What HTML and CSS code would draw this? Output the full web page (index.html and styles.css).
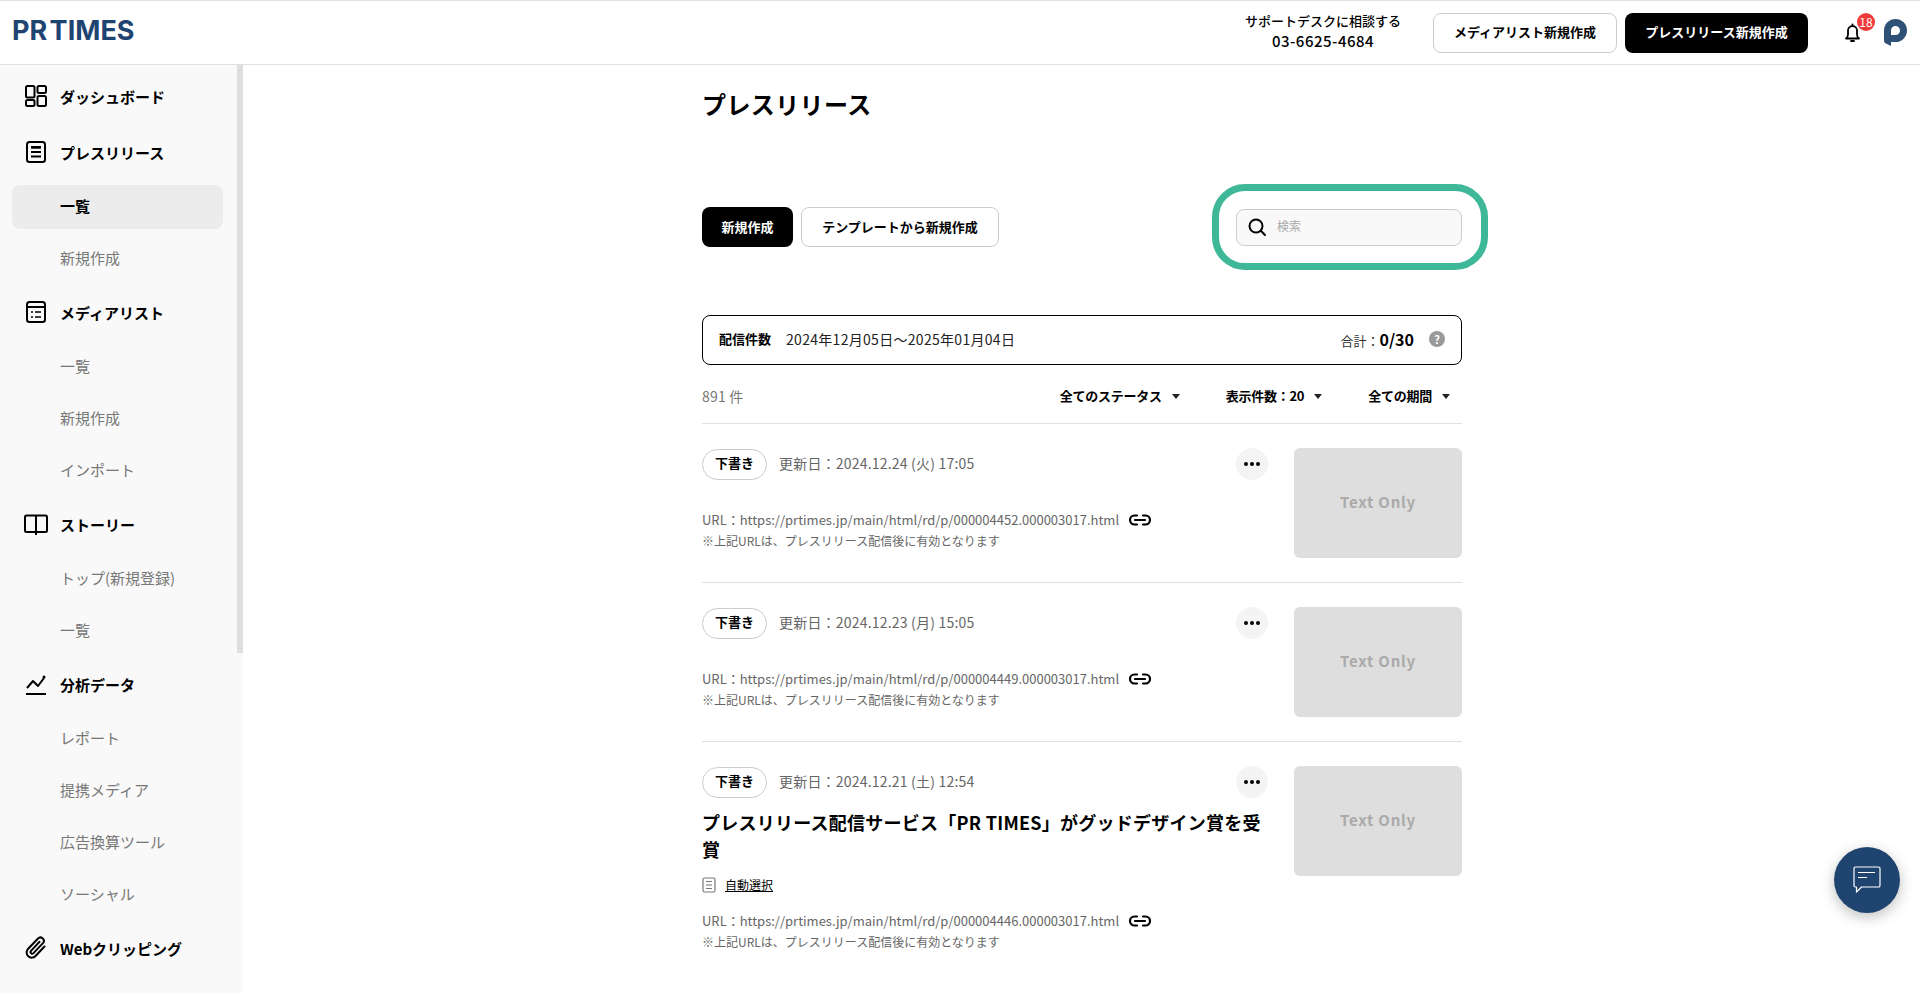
FILE: index.html
```html
<!DOCTYPE html>
<html lang="ja">

<head>
    <meta charset="UTF-8">
    <meta name="viewport" content="width=device-width, initial-scale=1.0">
    <title>プレスリリース一覧 | PR TIMES</title>
    <link rel="stylesheet" href="styles.css">
</head>

<body>
    <header class="topbar">
        <a class="logo">PR TIMES</a>
        <div class="topbar-right">
            <div class="support">
                <div>サポートデスクに相談する</div>
                <div class="support-tel">03-6625-4684</div>
            </div>
            <a class="btn btn-white btn-media">メディアリスト新規作成</a>
            <a class="btn btn-black btn-press">プレスリリース新規作成</a>
            <div class="bell">
                <svg width="15" height="19" viewBox="0 0 15 19" fill="none" stroke="#000" stroke-width="1.800" stroke-linejoin="round"><path d="M1 15.500c1.500-1 2-2 2-4V7.500a4.500 4.500 0 0 1 9 0v4c0 2 .5 3 2 4z"/><circle cx="7.500" cy="1.600" r="1" fill="#000" stroke="none"/><path d="M6 18h3" stroke-linecap="round"/></svg>
                <span class="badge">18</span>
            </div>
            <svg class="avatar" width="23" height="27" viewBox="0 0 23 27"><path d="M0 11.500A11.500 11.500 0 1 1 11.500 23H7v-7h4.500a4.500 4.500 0 1 0-4.500-4.500V27L2 24.500a3 3 0 0 1-2-3z" fill="#2f5176"/></svg>
        </div>
    </header>

    <div class="layout">
        <nav class="sidebar">
            <a class="nav-head">
                <svg width="24" height="24" viewBox="0 0 24 24" fill="none" stroke="#000" stroke-width="2"><rect x="2" y="2" width="8.500" height="11.500" rx="1.500"/><rect x="13.500" y="2" width="8.500" height="7" rx="1.500"/><rect x="2" y="16" width="8.500" height="6" rx="1.500"/><rect x="13.500" y="12" width="8.500" height="10" rx="1.500"/></svg>
                ダッシュボード
            </a>
            <a class="nav-head">
                <svg width="24" height="24" viewBox="0 0 24 24" fill="none" stroke="#000" stroke-width="2"><rect x="3" y="2" width="18" height="20" rx="2.500"/><path d="M7 7h10M7 7.800h10M7 12h10M7 16.500h10"/></svg>
                プレスリリース
            </a>
            <a class="nav-sub active">一覧</a>
            <a class="nav-sub">新規作成</a>
            <a class="nav-head">
                <svg width="24" height="24" viewBox="0 0 24 24" fill="none" stroke="#000" stroke-width="2"><rect x="3" y="2" width="18" height="20" rx="2.500"/><path d="M3 7h18"/><path d="M7 12h2M11 12h6M7 17h2M11 17h6" stroke-width="1.600"/></svg>
                メディアリスト
            </a>
            <a class="nav-sub">一覧</a>
            <a class="nav-sub">新規作成</a>
            <a class="nav-sub">インポート</a>
            <a class="nav-head">
                <svg width="24" height="24" viewBox="0 0 24 24" fill="none" stroke="#000" stroke-width="2" stroke-linejoin="round"><rect x="1" y="3.500" width="22" height="16.500" rx="1.500"/><path d="M12 3.500V23"/></svg>
                ストーリー
            </a>
            <a class="nav-sub">トップ(新規登録)</a>
            <a class="nav-sub">一覧</a>
            <a class="nav-head">
                <svg width="24" height="24" viewBox="0 0 24 24" fill="none" stroke="#000" stroke-width="2"><path d="M2 22h20"/><path d="M3 16l6-7 5 5 6-8" stroke-linejoin="round"/><circle cx="20" cy="5" r="1.500" fill="#000" stroke="none"/></svg>
                分析データ
            </a>
            <a class="nav-sub">レポート</a>
            <a class="nav-sub">提携メディア</a>
            <a class="nav-sub">広告換算ツール</a>
            <a class="nav-sub">ソーシャル</a>
            <a class="nav-head">
                <svg width="24" height="24" viewBox="0 0 24 24" fill="none" stroke="#000" stroke-width="2" stroke-linecap="round"><path d="M20.500 10.500l-9 9.500a5 5 0 0 1-7.500-7l10-10.500a3.400 3.400 0 0 1 5 4.600l-9.500 10a1.700 1.700 0 0 1-2.500-2.300l8.500-9"/></svg>
                Webクリッピング
            </a>
            <div class="scroll-thumb"></div>
        </nav>

        <main class="content">
            <h1 class="page-title">プレスリリース</h1>

            <div class="toolbar">
                <div class="toolbar-btns">
                    <a class="btn btn-black btn-new">新規作成</a>
                    <a class="btn btn-white btn-template">テンプレートから新規作成</a>
                </div>
                <div class="search">
                    <svg width="20" height="20" viewBox="0 0 20 20" fill="none" stroke="#000" stroke-width="2"><circle cx="9" cy="9" r="6.500"/><path d="M13.800 13.800L18 18" stroke-linecap="round"/></svg>
                    <span class="search-text">検索</span>
                    <div class="search-ring"></div>
                </div>
            </div>

            <div class="stats">
                <span class="stats-label">配信件数</span>
                <span class="stats-date">2024年12月05日～2025年01月04日</span>
                <span class="stats-total">合計：<b>0/30</b></span>
                <span class="help">?</span>
            </div>

            <div class="filters">
                <span class="count">891 件</span>
                <div class="filter-list">
                    <span class="filter">全てのステータス<i class="caret"></i></span>
                    <span class="filter">表示件数：20<i class="caret"></i></span>
                    <span class="filter">全ての期間<i class="caret"></i></span>
                </div>
            </div>

            <article class="item">
                <div class="item-body">
                    <div class="item-head">
                        <span class="tag">下書き</span>
                        <span class="item-date">更新日：2024.12.24 (火) 17:05</span>
                        <span class="dots"><i></i><i></i><i></i></span>
                    </div>
                    <div class="item-links">
                        <div class="item-url">URL：https://prtimes.jp/main/html/rd/p/000004452.000003017.html
                            <svg width="24" height="14" viewBox="0 0 24 14" fill="none" stroke="#000" stroke-width="2.200" stroke-linecap="round"><path d="M9 2.500H6.500a4.500 4.500 0 0 0 0 9H9M15 2.500h2.500a4.500 4.500 0 0 1 0 9H15M7 7h10"/></svg>
                        </div>
                        <div class="item-note">※上記URLは、プレスリリース配信後に有効となります</div>
                    </div>
                </div>
                <div class="thumb">Text Only</div>
            </article>

            <article class="item">
                <div class="item-body">
                    <div class="item-head">
                        <span class="tag">下書き</span>
                        <span class="item-date">更新日：2024.12.23 (月) 15:05</span>
                        <span class="dots"><i></i><i></i><i></i></span>
                    </div>
                    <div class="item-links">
                        <div class="item-url">URL：https://prtimes.jp/main/html/rd/p/000004449.000003017.html
                            <svg width="24" height="14" viewBox="0 0 24 14" fill="none" stroke="#000" stroke-width="2.200" stroke-linecap="round"><path d="M9 2.500H6.500a4.500 4.500 0 0 0 0 9H9M15 2.500h2.500a4.500 4.500 0 0 1 0 9H15M7 7h10"/></svg>
                        </div>
                        <div class="item-note">※上記URLは、プレスリリース配信後に有効となります</div>
                    </div>
                </div>
                <div class="thumb">Text Only</div>
            </article>

            <article class="item">
                <div class="item-body">
                    <div class="item-head">
                        <span class="tag">下書き</span>
                        <span class="item-date">更新日：2024.12.21 (土) 12:54</span>
                        <span class="dots"><i></i><i></i><i></i></span>
                    </div>
                    <h2 class="item-title">プレスリリース配信サービス「PR TIMES」がグッドデザイン賞を受賞</h2>
                    <div class="item-cat">
                        <svg width="14" height="16" viewBox="0 0 14 16" fill="none" stroke="#777" stroke-width="1.200"><rect x="1" y="1" width="12" height="14" rx="1.500"/><path d="M4 4.500h6M4 8h6M4 11.500h6"/></svg>
                        <a>自動選択</a>
                    </div>
                    <div class="item-links">
                        <div class="item-url">URL：https://prtimes.jp/main/html/rd/p/000004446.000003017.html
                            <svg width="24" height="14" viewBox="0 0 24 14" fill="none" stroke="#000" stroke-width="2.200" stroke-linecap="round"><path d="M9 2.500H6.500a4.500 4.500 0 0 0 0 9H9M15 2.500h2.500a4.500 4.500 0 0 1 0 9H15M7 7h10"/></svg>
                        </div>
                        <div class="item-note">※上記URLは、プレスリリース配信後に有効となります</div>
                    </div>
                </div>
                <div class="thumb">Text Only</div>
            </article>
        </main>
    </div>

    <div class="chat">
        <svg width="30" height="28" viewBox="0 0 30 28" fill="none" stroke="#fff" stroke-width="1.200"><path d="M3.500 1h23A1.500 1.500 0 0 1 28 2.500v17a1.500 1.500 0 0 1-1.500 1.500H9.500L4.500 26v-5h-1A1.500 1.500 0 0 1 2 19.500v-17A1.500 1.500 0 0 1 3.500 1z" stroke-linejoin="round"/><path d="M6 6.500h17M6 11.500h9"/></svg>
    </div>
</body>

</html>
```

FILE: styles.css
```css
* {
    box-sizing: border-box;
}

html, body {
    height: 100%;
    overflow: hidden;
}

body {
    margin: 0;
    background-color: #fff;
    color: #000;
    font-family: "Noto Sans CJK JP", "Noto Sans", sans-serif;
}

/* header */
.topbar {
    height: 65px;
    display: flex;
    align-items: center;
    justify-content: space-between;
    border-top: 1px solid #e0e0e0;
    border-bottom: 1px solid #e0e0e0;
    padding-left: 12px;
}

.logo {
    padding-bottom: 4px;
    font-family: Inter, sans-serif;
    font-weight: 700;
    font-size: 27px;
    word-spacing: -4px;
    color: #1f4471;
    white-space: nowrap;
}

.topbar-right {
    display: flex;
    align-items: center;
    height: 100%;
}

.support {
    width: 160px;
    padding-bottom: 3px;
    text-align: center;
    font-size: 13px;
    font-weight: 500;
    line-height: 20px;
    margin-right: 30px;
}

.support-tel {
    font-size: 15px;
    letter-spacing: .5px;
}

.btn {
    display: flex;
    align-items: center;
    justify-content: center;
    height: 40px;
    padding-bottom: 2px;
    border-radius: 8px;
    font-size: 13px;
    font-weight: 700;
    white-space: nowrap;
}

.btn-white {
    background-color: #fff;
    border: 1px solid #ccc;
}

.btn-black {
    background-color: #000;
    color: #fff;
}

.btn-media {
    width: 184px;
    margin-right: 8px;
}

.btn-press {
    width: 183px;
}

.bell {
    position: relative;
    display: flex;
    width: 15px;
    height: 19px;
    margin-left: 37px;
}

.badge {
    position: absolute;
    top: -10px;
    left: 12px;
    width: 18px;
    height: 18px;
    border-radius: 50%;
    background-color: #f03a3a;
    color: #fff;
    font-size: 12px;
    line-height: 17px;
    text-align: center;
}

.avatar {
    margin-left: 24px;
    margin-right: 13px;
}

/* sidebar */
.layout {
    display: flex;
    height: calc(100% - 65px);
}

.sidebar {
    position: relative;
    flex: 0 0 243px;
    display: flex;
    flex-direction: column;
    padding-top: 3px;
    background-color: #f9f9f9;
    overflow: hidden;
}

.nav-head {
    flex: none;
    display: flex;
    align-items: center;
    gap: 12px;
    height: 56px;
    padding-left: 24px;
    font-size: 15px;
    font-weight: 700;
}

.nav-sub {
    flex: none;
    display: flex;
    align-items: center;
    height: 44px;
    margin: 5px 20px 3px 12px;
    padding: 0 0 3px 48px;
    border-radius: 8px;
    font-size: 15px;
    color: #777;
}

.nav-sub.active {
    background-color: #ececec;
    color: #000;
    font-weight: 700;
}

.scroll-thumb {
    position: absolute;
    top: 0;
    right: 0;
    width: 6px;
    height: 588px;
    background-color: #dedede;
}

/* main */
.content {
    flex: 1;
    min-width: 0;
    padding: 21px 458px 0 459px;
}

.page-title {
    margin: 0 0 85px;
    font-size: 24px;
    letter-spacing: .4px;
    line-height: 36px;
    font-weight: 700;
}

.toolbar {
    display: flex;
    align-items: center;
    justify-content: space-between;
    height: 40px;
    margin-bottom: 68px;
}

.toolbar-btns {
    display: flex;
    gap: 8px;
}

.btn-new {
    width: 91px;
}

.btn-template {
    width: 198px;
}

.search {
    position: relative;
    display: flex;
    align-items: center;
    width: 226px;
    height: 37px;
    padding-left: 10px;
    border: 1px solid #ccc;
    border-radius: 8px;
    background-color: #f9f9f9;
}

.search-text {
    margin-left: 10px;
    padding-bottom: 3px;
    font-size: 12px;
    color: #aaa;
}

.search-ring {
    position: absolute;
    top: -26px;
    left: -25px;
    right: -27px;
    bottom: -25px;
    border: 7px solid #3eb898;
    border-radius: 33px;
}

.stats {
    display: flex;
    align-items: center;
    height: 50px;
    padding: 0 16px 3px;
    border: 1px solid #000;
    border-radius: 8px;
    font-size: 13px;
}

.stats-label {
    font-weight: 700;
    margin-right: 15px;
}

.stats-date {
    color: #222;
    font-size: 14px;
    letter-spacing: .3px;
}

.stats-total {
    margin-left: auto;
    color: #333;
}

.stats-total b {
    color: #000;
    font-size: 16px;
}

.help {
    width: 16px;
    height: 16px;
    margin-left: 15px;
    border-radius: 50%;
    background-color: #999;
    color: #fff;
    font-size: 11px;
    font-weight: 700;
    line-height: 16px;
    text-align: center;
}

.filters {
    display: flex;
    align-items: center;
    justify-content: space-between;
    height: 58px;
    padding: 2px 12px 0 0;
}

.count {
    padding-top: 1px;
    font-size: 14px;
    letter-spacing: .2px;
    color: #777;
}

.filter-list {
    display: flex;
    gap: 46px;
}

.filter {
    display: flex;
    align-items: center;
    gap: 10px;
    font-size: 13px;
    font-weight: 700;
    letter-spacing: -.25px;
}

.caret {
    width: 0;
    height: 0;
    margin-top: 2px;
    border-left: 4px solid transparent;
    border-right: 4px solid transparent;
    border-top: 5px solid #222;
}

.item {
    display: flex;
    gap: 26px;
    padding: 24px 0 24px;
    border-top: 1px solid #e0e0e0;
}

.item-body {
    flex: 1;
    min-width: 0;
}

.item-head {
    display: flex;
    align-items: center;
    height: 32px;
}

.tag {
    display: flex;
    align-items: center;
    justify-content: center;
    width: 65px;
    height: 31px;
    padding-bottom: 3px;
    border: 1px solid #ccc;
    border-radius: 16px;
    font-size: 13px;
    font-weight: 700;
}

.item-date {
    margin-left: 12px;
    padding-bottom: 3px;
    font-size: 14px;
    letter-spacing: .2px;
    color: #666;
}

.dots {
    display: flex;
    align-items: center;
    justify-content: center;
    gap: 2px;
    width: 32px;
    height: 32px;
    margin-left: auto;
    border-radius: 50%;
    background-color: #f4f4f4;
}

.dots i {
    width: 4px;
    height: 4px;
    border-radius: 50%;
    background-color: #000;
}

.item-title {
    margin: 11px 0 0;
    font-size: 18px;
    letter-spacing: .25px;
    line-height: 27px;
    font-weight: 700;
}

.item-cat {
    display: flex;
    align-items: center;
    gap: 9px;
    margin-top: 12px;
    font-size: 12px;
    line-height: 20px;
}

.item-cat a {
    text-decoration: underline;
}

.item-links {
    margin-top: 29px;
}

.item-cat + .item-links {
    margin-top: 15px;
}

.item-url, .item-note {
    font-size: 13px;
    line-height: 21px;
    color: #666;
}

.item-note {
    font-size: 12px;
}

.item-url {
    display: flex;
    align-items: center;
    gap: 9px;
}

.thumb {
    flex: 0 0 168px;
    height: 110px;
    padding-bottom: 3px;
    display: flex;
    align-items: center;
    justify-content: center;
    border-radius: 6px;
    background-color: #dedede;
    color: #aaa;
    font-size: 15px;
    font-weight: 700;
    letter-spacing: .8px;
}

/* floating chat button */
.chat {
    position: fixed;
    right: 20px;
    bottom: 80px;
    width: 66px;
    height: 66px;
    display: flex;
    align-items: center;
    justify-content: center;
    border-radius: 50%;
    background-color: #204470;
    box-shadow: 0 4px 14px rgba(0, 0, 0, .25);
}
```
